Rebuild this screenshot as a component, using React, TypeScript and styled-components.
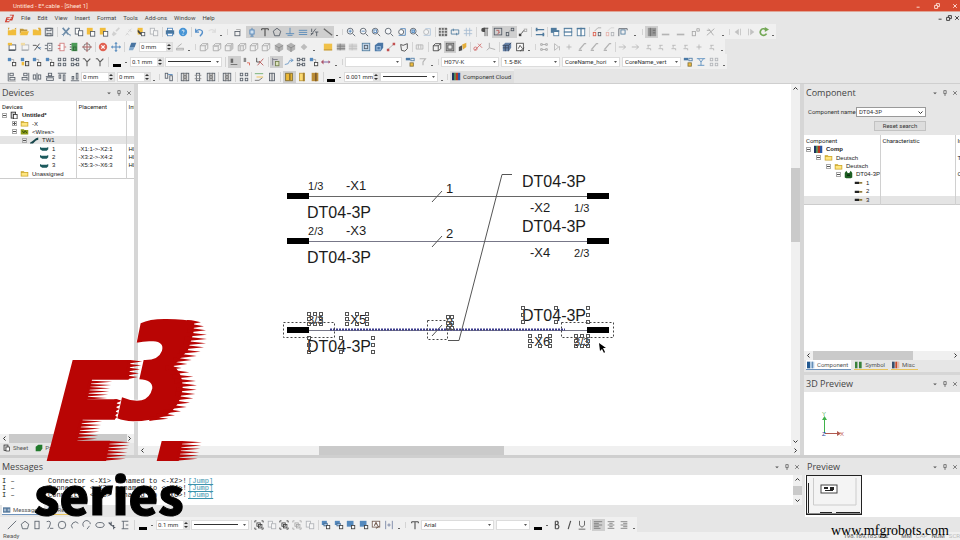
import React from "react";
import styled, { createGlobalStyle } from "styled-components";

const ui = 'Roboto, "Open Sans", sans-serif';
const headFont = '"Open Sans", "Noto Sans", sans-serif';
const sans = '"Liberation Sans", Arial, sans-serif';

const Global = createGlobalStyle`
  * { box-sizing: border-box; }
  html, body { margin: 0; }
  body { background: #e6e6e6; color: #333; font: 6px/8px ${ui}; overflow: hidden; }
  button, input, select { font: inherit; color: inherit; margin: 0; padding: 0; border: 0; border-radius: 0; background: none; outline: 0; }
`;

/* ---------- icons ---------- */

const N = "#39424e";
const B = "#2f6fb0";
const Y = "#f2b51d";
const G = "#9a9a9a";
const R = "#d9442f";
const K = "#222";

const box = (x: number, y: number, w: number, h: number, s = N, f = "none") => (
  <rect x={x} y={y} width={w} height={h} stroke={s} fill={f} />
);
const ln = (d: string, s = N, w = 1) => <path d={d} stroke={s} strokeWidth={w} fill="none" />;
const sh = (d: string, f = N) => <path d={d} fill={f} stroke="none" />;

const cube = (extra?: React.ReactNode, s = G) => (
  <>
    {ln("M1.5 4.5h6v6h-6zM4 2h6.500v6M1.500 4.500 4 2M7.500 4.500 10.500 2M7.500 10.500 10.500 8", s)}
    {extra}
  </>
);
const lens = (inner?: React.ReactNode) => (
  <>
    <circle cx="5" cy="5" r="3.500" stroke={N} fill="#f7f9fb" />
    {ln("M8 8l3 3", N, 1)}
    {inner}
  </>
);
const lines = (xs: number[][]) => ln(xs.map(([a, b, y]) => `M${a} ${y}H${b}`).join(""), "#666");

const glyphs: Record<string, React.ReactNode> = {
  fnew: <>{sh("M1 4h4l1-1h5v7H1z", Y)}{sh("M1 1h2l-1 3zM9 2l2-1v2z", "#c98a00")}</>,
  fopen: <>{sh("M1 2h4l1 1h4v2H3L1 9z", "#b98a1d")}{sh("M3 5h9l-2 5H1z", Y)}</>,
  fdoc: <>{sh("M1 3h4l1 1h5v6H1z", Y)}{sh("M7 1h3l1 3-2 1z", "#d99f16")}</>,
  save: <>{box(1.5, 1.5, 9, 9, N, "#f8f8f8")}{box(3.5, 1.5, 5, 3)}{box(3.5, 7.5, 5, 3, N, "#ccc")}</>,
  cut: <>{ln("M2 1l7 8M10 1L3 9", "#557a9c", 2)}{ln("M1 9h2v2M9 9h2v2", "#557a9c")}</>,
  copy: <>{box(1.5, 1.5, 5, 7, N, "#fff")}{box(5.5, 4.5, 5, 6, N, "#fff")}</>,
  paste: <>{sh("M1 1h7v8H1z", Y)}{box(5.5, 5.5, 5, 5.5, N, "#fff")}</>,
  brush: <>{ln("M10 1L6 5", G, 2)}{sh("M3 5l4 3-4 3-2-2z", G)}</>,
  link: <>{ln("M9 2L5 6M6 3l3 3M2 10l3-3M3 7l3 3", G)}</>,
  pasteb: <>{sh("M2 1h6v8H2z", Y)}{sh("M2 3l6 6H5L2 6z", K)}{box(6.5, 6.5, 4, 4, N, "#fff")}</>,
  print: <>{box(3, 1.5, 6, 3, B, "#fff")}{sh("M1 4h10v5H1z", "#2d618f")}{box(3, 7.5, 6, 3, B, "#fff")}</>,
  help: <><circle cx="6" cy="6" r="5" fill="#2b86d1" />{ln("M4.500 4.500q1.500-2 3 0q0 1-1.500 2M6 8v1.500", "#fff")}</>,
  undo: ln("M2 2v4h4M2 6q4-5 8-1q1 3-3 6", "#3a7fc4", 1.5),
  redo: ln("M10 2v4H6M10 6Q6 1 2 5", "#bbb", 1.5),
  lock: <>{box(3.5, 5.5, 6, 5)}{ln("M5 3h5v2", G)}</>,
  plug: <>{box(3.5, 3.5, 5, 5, B, "#cfe3f5")}{ln("M6 1v2M6 9v2M4 11h4", B)}</>,
  T: ln("M2 2h8M6 2v9M2 2v2M10 2v2", "#333", 1.3),
  penta: ln("M6 1.500l4.500 3.500-1.700 5.500H3.200L1.500 5z", N),
  ground: ln("M6 1v7M1 8h10M3 10h6", "#3978b5"),
  bars: ln("M1 4h10M1 6.500h10M1 9h10", "#3978b5"),
  frac: ln("M2 2v4M1 10L7 2M6 6h4M8 6v5M1 8h3", N),
  slash: ln("M1 2l10 8", "#555", 1.5),
  zin: lens(ln("M3 5h4M5 3v4", B)),
  zout: lens(ln("M3 5h4", B)),
  zpage: lens(box(3.5, 3.5, 3, 3, B)),
  z: lens(),
  zwin: <>{ln("M2 10h8V2H4", B)}<circle cx="5" cy="6" r="3" stroke={N} fill="#fff" /></>,
  zall: lens(box(3.500, 3.500, 3, 3, B, "#9cc3e8")),
  grid: <>{sh("M1 1h10v10H1z", "#555")}{ln("M1 4h10M1 7.500h10M4 1v10M7.500 1v10", "#eee")}</>,
  clip: <>{ln("M1.500 3.500h9v5h-9zM4 2v3M8 7v3", "#33668f")}</>,
  guides: ln("M4 1v10M8 1v10M1 4h10M1 8h10", "#9ab3cc"),
  para: <>{sh("M6 1H4a2.500 2.500 0 000 5h2z", "#333")}{ln("M6 1v10M8.500 1v10M5 1.500h5", "#333")}</>,
  flow: <>{box(1.500, 1.500, 9, 8)}{ln("M4 4h3v3M5 9l3-3", "#b24040")}</>,
  nodes: <>{box(1.500, 6.500, 3, 4)}{box(7.500, 1.500, 3, 3)}{ln("M4 6l4-3", G)}</>,
  nodes2: <>{sh("M1 8h3v3H1z", K)}{box(7.500, 2.500, 3, 3, G)}{ln("M4 8l3-4", K)}</>,
  swap: <>{ln("M1 3h10M1 9h10", "#33668f", 1.500)}{sh("M1 1h2v4H1zM9 7h2v4H9z", "#33668f")}</>,
  casc: <>{sh("M1 1h7v6H1z", "#33668f")}{box(4.500, 4.500, 6, 6, "#33668f", "#fff")}{sh("M4 4h7v2H4z", "#33668f")}</>,
  tileh: <>{box(1.500, 1.500, 9, 9, "#33668f", "#fff")}{ln("M1 6h10", "#33668f", 1.500)}{ln("M1 2h10", "#33668f")}</>,
  tilev: <>{box(1.500, 1.500, 9, 9, "#33668f", "#fff")}{ln("M6 1v10M1 2h10", "#33668f", 1.500)}</>,
  rnodes: <>{box(1.500, 6.500, 3, 4, R)}{box(7.500, 6.500, 3, 4)}{ln("M3 5l4-4h4", G)}</>,
  port: <>{box(3.500, 3.500, 5, 5, "#33668f")}{ln("M1 2h10M1 2v9M11 2v2", N)}</>,
  sheet: <>{sh("M1 1h10v10H1z", "#8b8b8b")}{ln("M4 1v10M7 4h3M7 7h3", "#555")}</>,
  dash: ln("M1 9h9", "#aaa", 2),
  super: <>{box(1.500, 5.500, 4, 5, G)}{ln("M7 2h3v3H7z", G)}</>,
  cross: ln("M1 10L10 2M3 2l6 8M1 4h4", "#999"),
  prev: <>{sh("M7 2v8L2 6z", "#bbb")}{ln("M9 2v8", "#bbb")}</>,
  next: <>{sh("M5 2v8l5-4z", "#bbb")}{ln("M3 2v8", "#bbb")}</>,
  refresh: <>{ln("M9 8a4 4 0 11-1-5", "#5d9b3a", 2)}{sh("M7 0l5 3-5 3z", "#5d9b3a")}</>,
  sheetn: <>{box(2.500, 3.500, 8, 6, N, "#fff")}{sh("M1 1h5v3H1z", Y)}{ln("M2 10l8 0", N, 1.500)}</>,
  wires: <>{ln("M1 4h4l5 5M3 10L9 2", K)}{ln("M7 7h4", B)}</>,
  conn: <>{box(4.500, 1.500, 5, 9, N, "#fff")}{ln("M1 4h3M1 8h3M6 4h2M6 8h2", N)}</>,
  rconn: <>{box(3.500, 1.500, 5, 9, "#c66", "#fff")}{ln("M1 4h3M1 8h3M9 6h2", "#c44")}</>,
  green: <>{sh("M3 1h7v10H3z", "#2f8c3c")}{ln("M1 3h2M1 6h2M1 9h2", K)}{box(5.500, 6, 3, 4, "#124d1b")}</>,
  target: <><circle cx="6" cy="6" r="4" stroke="#555" fill="none" />{ln("M6 0v12M0 6h12", "#933")}</>,
  stop: <><circle cx="6" cy="6" r="5" fill="#df4a37" />{ln("M4 4l4 4M8 4l-4 4", "#fff", 1.500)}</>,
  move: <>{ln("M6 1v10M1 6h10", "#3978b5", 1.300)}{sh("M6 0l2 2H4zM6 12l2-2H4zM0 6l2-2v4zM12 6l-2-2v4z", "#3978b5")}</>,
  stack: <>{sh("M4 1h6l-2 5H2z", "#2b5f94")}{sh("M2 6h6l-2 4H1z", "#6f9cc6")}</>,
  pour: <>{box(2, 7.500, 8, 2, G)}{ln("M3 6l5-4", G)}</>,
  cube1: cube(), cube2: cube(sh("M1 4h7v2H1z", "#bbb")), cube3: cube(sh("M8 4l3-2v6l-3 3z", "#bbb")), cube4: cube(sh("M3 4h2v6H3z", "#bbb")),
  hex: <>{sh("M6 1l5 3v5l-5 3-5-3V4z", "#a8a8a8")}{ln("M1 4l5 3 5-3M6 7v5", "#777")}</>,
  diam: sh("M6 2l4 4-4 4-4-4z", "#b5b5b5"),
  ysheet: <>{sh("M1 2h10v8H1z", "#f0b92d")}{ln("M1 9.500h10", "#a87b12")}</>,
  rack: <>{sh("M1 2h10v8H1z", "#aaa")}{ln("M1 5h10M1 8h10M5 2v8", "#666")}</>,
  panel: <>{box(1.500, 1.500, 9, 9, "#33668f", "#bcd3e8")}{box(4, 4, 4, 4, N)}</>,
  bluebox: <>{sh("M1 4l4-3h6v6l-3 4H1z", "#2f639a")}{box(3.500, 5.500, 4, 4, "#9fc2e6")}</>,
  rpath: <>{ln("M2 9l8-7", G)}{sh("M1 8h3v3H1zM8 1h3v3H8z", "#b33")}</>,
  shield: ln("M2 3l3 1 5-2v6l-3 3-4-1z", K),
  dots: <>{ln("M1.500 3.500h8v5h-8zM4 3v5M7 3v5", "#aaa")}</>,
  wcube: cube(undefined, K),
  frame: <>{box(1.500, 1.500, 9, 9, "#444", "#bbb")}{box(3.500, 3.500, 5, 5, "#333", "#eee")}</>,
  ybolt: <>{sh("M1 6l4-2v6l-4 1z", "#333")}{sh("M5 3l5-2v5l-4 3z", "#e2a21a")}</>,
  redx: <>{ln("M2 10l8-8M6 2l5 5", "#c55")}<circle cx="3" cy="8" r="2" stroke="#c55" fill="none" /></>,
  axis: ln("M4 1v6l7 2M4 7l-3 3", "#999"),
  bcube: <>{sh("M1 4l3-3h7v6l-3 4H1z", "#4f6f9b")}{ln("M1 4h7v7M8 4l3-3M4 4v7M1 7h7", "#1f2d45")}</>,
  report: <>{box(2, 1.500, 8, 9, K, "#fff")}{ln("M4 8l2-4 3 4M6 11l5-4", K)}</>,
  fgrp: ln("M2 2h2v2H2zM8 2h2v2H8zM2 8h2v2H2zM8 8h2v2H8zM4 3h4M4 9h4", "#999"),
  fplay: ln("M3 2l5 4-5 4zM9 5v5", "#aaa"),
  plus: ln("M3 6h6M6 3v6", "#aaa"),
  fdiag: ln("M2 10h4M3 9l6-7h2", "#aaa", 1.500),
  fsmall: ln("M4 4h4M5 4v3M3 8h5v2", "#aaa"),
  farrow: ln("M1 6h8M6 3l3 3-3 3", "#aaa"),
  bnode: <>{sh("M1 1h4v4H1z", "#3978b5")}{ln("M5 3h3v3", G)}{box(6.500, 6.500, 4, 4, K, "#fff")}</>,
  bnodey: <>{sh("M1 1h4v4H1z", "#3978b5")}{sh("M2 6h3v4H2z", Y)}{box(6.500, 5.500, 4, 5, K, "#ddd")}</>,
  quad: <>{box(1.500, 1.500, 3, 3)}{box(7.500, 1.500, 3, 3)}{box(1.500, 7.500, 3, 3)}{box(7.500, 7.500, 3, 3)}</>,
  quadl: <>{box(1.500, 1.500, 3, 3)}{box(7.500, 1.500, 3, 3)}{box(1.500, 7.500, 3, 3)}{box(7.500, 7.500, 3, 3)}{ln("M5 3h3M5 9h3", N)}</>,
  fork: <>{ln("M6 11V6L3 2H1M6 6l4-4", "#444", 1.300)}</>,
  tag: <>{sh("M2 2h3v5H2z", "#555")}{ln("M2 9h8", "#555")}</>,
  tagr: <>{sh("M2 1h3v5H2z", "#777")}{ln("M6 7h3v3", R)}</>,
  tagx: <>{ln("M2 1v5h4", K)}{ln("M3 10l7-8M5 5l5 5", "#a33")}</>,
  ybox: <>{box(5.500, 5.500, 4, 5, "#5f7030", "#dfe6b8")}{ln("M2 1v9M2 3h6", "#667")}</>,
  bwave: ln("M1 9l4-1 2-4h4M8 2l3 2-3 2", "#4d86bd"),
  redarrow: <>{ln("M1 6h10", "#6d4e9c", 1.200)}{sh("M3 3v6L0 6zM9 4v4l2-2z", "#a33b50")}</>,
  chain: <>{sh("M1 1h5v3H1z", "#2c6499")}{box(7, 1.500, 4, 3, "#2c6499")}{box(6, 7, 4, 4, "#6d5a20", Y)}</>,
  filt: ln("M2 2h7L6 6v4", "#aaa", 1.300),
  ytee: ln("M1 2h10M3 2l3 4 3-4M6 6v4M2 10h8", "#3978b5"),
  alignl: <>{ln("M1.500 11h9", G)}{box(3.500, 1.500, 4, 3)}{box(3.500, 6.500, 6, 3)}{ln("M1.500 1v10")}</>,
  alignr: <>{box(4.500, 1.500, 4, 3)}{box(2.500, 6.500, 6, 3)}{ln("M10.500 1v10")}</>,
  alignc: <>{box(1.500, 3.500, 3, 5)}{box(7.500, 3.500, 3, 5)}{ln("M6 1v10")}</>,
  alignm: <>{box(4, 1.500, 4, 3)}{box(2, 7, 8, 3)}{ln("M1 5.500h10")}</>,
  aligntop: <>{ln("M1 1.500h10")}{box(2.500, 3.500, 2, 4)}{box(7.500, 3.500, 2, 7)}</>,
  alignbot: <>{ln("M1 10.500h10")}{box(2.500, 5.500, 2, 3)}{box(7.500, 1.500, 2, 7)}</>,
  pair: <>{box(1.500, 1.500, 3, 6)}{box(7, 4.500, 3, 6)}{ln("M5 3h5v1", B)}</>,
  film: <>{box(1.500, 1.500, 9, 9)}{ln("M4 1v10M8 1v10M4 6h4", "#555")}{sh("M5 3h2v2H5zM5 7h2v2H5z", "#555")}</>,
  film2: <>{box(4, 1.500, 4, 9)}{ln("M2 4h8M2 8h8", "#777")}</>,
  wave: <>{ln("M1 2h10", "#4a9b4a")}{ln("M3 6h8", Y)}{ln("M1 10h5l4-3", "#555")}</>,
  book: <>{box(3, 1.500, 6, 9, N, "#ddd")}{ln("M6 1v10")}</>,
  gold: <>{box(2, 1.500, 8, 9, "#6b5410", Y)}{sh("M6 2h2v8H6z", "#8a6a12")}</>,
  gold2: <>{box(3, 1.500, 6, 9, "#b58b1a", "#ffd75c")}{sh("M7 1h2v10H7z", "#9a6d10")}</>,
  gold3: <>{sh("M2 1h8v10H2z", "#b27c16")}{sh("M6 1h2v10H6z", "#6d4308")}</>,
  line: ln("M1 11L11 1"), penta2: ln("M6 1.500L10.500 5 9 10.500H3L1.500 5z"), rect: box(3.500, 1.500, 5, 9),
  curve: ln("M2 2q6-2 4 4t-3 4M6 10h4"), circ: <circle cx="6" cy="6" r="4.500" stroke={N} fill="none" />,
  arc: ln("M3 10a4.500 4.500 0 117-6"), arc2: ln("M2 8a4.500 4.500 0 118-3M9 7l-3 4"),
  oval: <ellipse cx="6" cy="6" rx="5" ry="3" stroke={N} fill="none" />,
  spline: <>{ln("M2 3l3 3 5 3M5 2v5M8 6v5", N, 1.300)}</>,
  text: ln("M2 1.500h8M4 1.500v9M2 10.500h8M7 6h3"),
  group: <>{box(3.500, 3.500, 4, 4, K)}{box(5.500, 5.500, 4, 4, K)}{ln("M1 3V1h2M9 1h2v2M1 9v2h2M11 9v2H9", K)}</>,
  order: <>{sh("M1 1h6v5H1z", "#3978b5")}{box(3.500, 4, 4, 3, "#235180", "#9fc4e8")}{box(6.500, 6.500, 4, 4, K, "#fff")}</>,
  order2: <>{sh("M1 1h8v7H1z", "#3978b5")}{box(6.500, 6.500, 4, 4, K, "#fff")}</>,
  poster: <>{box(1.500, 1.500, 9, 7, "#5c4033", "#fff")}{ln("M4 7l2-4 2 4M6 10l4-3", "#5c4033", 1.300)}</>,
  spread: ln("M2 1v10M10 1v10M4 6h4M6 4v4", "#5b6e94"),
  B: ln("M4 1.500v9M4 1.500h2.500q2 2 0 4H4h3q2.500 2.500 0 5H4", "#333", 1.400),
  I: ln("M8 1L5 11", "#333", 1.400),
  U: ln("M3 1v5q3 5 6 0V1M2 11h8", "#555", 1.200),
  left: lines([[1, 11, 2], [1, 7, 4], [1, 11, 6], [1, 7, 8], [1, 9, 10]]),
  center: lines([[2, 10, 2], [4, 8, 4], [2, 10, 6], [4, 8, 8], [2, 10, 10]]),
  right: lines([[2, 10, 2], [5, 10, 4], [2, 10, 6], [5, 10, 8], [2, 10, 10]]),
  logo: <>{sh("M3 5h4v1H4v1h2v1H4l-1 2h4l-1 1H1z", "#d03a2b")}{sh("M7 2h5l-1 4-1 3H6l1-2h2V6H8V5h2V3H7z", "#d03a2b")}</>,
  doc: <>{box(1.500, 1.500, 6, 8, K, "#ccc")}{box(4.500, 4.500, 5, 6, K, "#fff")}</>,
  folder: <>{sh("M1 3h4l1 1h5v6H1z", "#c9a227")}{sh("M2 5h8v4H2z", "#ffe680")}</>,
  wfolder: <>{sh("M1 3h4l1 1h5v6H1z", "#8d9b18")}{ln("M3 5l2 3 2-3 2 3", "#33510e", 1.300)}</>,
  cable: <>{sh("M0 9l3-2 5-4 3-1v3l-3 1-4 4H0z", "#15454a")}</>,
  core: <>{sh("M0 4l2 1h7l2-1v3L9 9H3L0 7z", "#1c5a5d")}</>,
  comp: <>{sh("M0 1h3v10H0z", "#1d3561")}{sh("M3 1h2v10H3z", "#2a7d35")}{sh("M5 1h3v10H5z", "#b6371f")}{sh("M8 1h3v10H8z", "#2a57a5")}</>,
  dplug: <>{sh("M1 4l2-3 2 3h2l2-3 2 3v6l-2 1H3l-2-1z", "#1d5e22")}{sh("M4 6h4v2H4z", "#0c2d10")}</>,
  pin: <>{sh("M1 5h6v3H1z", K)}{ln("M7 6.500h4", "#806a20", 2)}</>,
  bbook: <>{sh("M0 1h5v10H0z", "#235a92")}{sh("M5 1h6v10H5z", "#b7cfe4")}{ln("M8 1v10", "#235a92")}</>,
  gbook: <>{sh("M0 1h4v10H0zM6 1h4v10H6z", "#39823b")}{sh("M4 1h2v10H4z", "#ddd")}</>,
  rbook: <>{sh("M0 1h4v10H0z", "#38506e")}{sh("M5 1h3v10H5z", "#c7482a")}{sh("M8 1h3v10H8z", "#e5b8a8")}</>,
  leaf: sh("M1 4l4-3h6v6l-3 4H1z", "#217a2c"),
  msg: <>{sh("M0 2h11v8H0z", "#54789c")}{ln("M2 4v4M4 4v4M7 5h3M7 7h3", "#e8f0f8")}</>,
};

const Svg = styled.svg`
  display: block;
  flex: none;
  width: 10px;
  height: 10px;
  overflow: visible;
`;
const Icon = ({ name }: { name: string }) => (
  <Svg viewBox="0 0 12 12" aria-hidden="true">{glyphs[name]}</Svg>
);

/* ---------- toolbars ---------- */

const TitleBar = styled.header`
  display: flex;
  align-items: center;
  gap: 3px;
  height: 12px;
  padding: 0 2px;
  flex: none;
  color: #ffe5dd;
  background: #d84a30;
  border-bottom: 1px solid #e0a596;
`;
const Spacer = styled.span`flex: 1;`;
const WinButtons = styled.div<{ $gap: number }>`
  display: flex;
  gap: ${(p) => p.$gap}px;
`;
const WinButton = styled.button`
  display: block;
  width: 6px;
  height: 6px;
  svg { width: 6px; height: 6px; }
`;
const winPaths = { Minimize: "M1 7h5", Restore: "M1 4h5v5H1zM4 4V1h5v5H6", Close: "M2 2l6 6M8 2L2 8" };
const Win = ({ gap }: { gap: number }) => (
  <WinButtons $gap={gap}>
    {(["Minimize", "Restore", "Close"] as const).map((n) => (
      <WinButton key={n} aria-label={n}>
        <Svg viewBox="0 0 10 10"><path d={winPaths[n]} fill="none" stroke="currentColor" strokeWidth="1.500" /></Svg>
      </WinButton>
    ))}
  </WinButtons>
);

const MenuBar = styled.nav`
  display: flex;
  align-items: center;
  height: 12px;
  padding: 0 0 0 4px;
  flex: none;
  gap: 7px;
`;
const MenuItem = styled.button`
  white-space: nowrap;
  color: #444;
`;
const Toolbars = styled.div`
  display: grid;
  grid-template-rows: repeat(4, 1fr);
  justify-items: start;
  height: 59px;
  flex: none;
`;
const Strip = styled.div`
  display: flex;
  align-items: center;
  height: 15px;
  padding-left: 6px;
  background: #f0f0f0;
`;
const Group = styled.div<{ $w: number }>`
  display: flex;
  flex: none;
  width: ${(p) => p.$w}px;
`;
const Tool = styled.button<{ $on: boolean; $dim: boolean }>`
  display: flex;
  flex: 1;
  min-width: 0;
  height: 12px;
  align-items: center;
  justify-content: center;
  background: ${(p) => (p.$on ? "#cfcfcf" : "none")};
  svg { opacity: ${(p) => (p.$dim ? 0.35 : 0.85)}; }
`;
const Sep = styled.span<{ $w: number; $grip?: boolean }>`
  flex: none;
  display: block;
  width: ${(p) => p.$w}px;
  height: 10px;
  background: linear-gradient(#d4d4d4, #d4d4d4) center / 1px ${(p) => (p.$grip ? "6px" : "10px")} no-repeat;
`;
const Gap = styled.span<{ $w: number }>`
  flex: none;
  width: ${(p) => p.$w}px;
`;
const More = styled.button<{ $w: number }>`
  flex: none;
  width: ${(p) => p.$w}px;
  height: 12px;
  background: linear-gradient(#666, #666) center bottom 2px / 2px 1px no-repeat;
`;

const Tools = ({ w, i }: { w: number; i: string }) => (
  <Group $w={w}>
    {i.split(" ").map((t, k) => {
      const n = t.replace(/[!~]/g, "");
      return (
        <Tool key={k} $on={t.includes("!")} $dim={t.includes("~")} aria-label={n}>
          <Icon name={n} />
        </Tool>
      );
    })}
  </Group>
);

const Field = styled.label<{ $w: number }>`
  display: flex;
  align-items: center;
  flex: none;
  width: ${(p) => p.$w}px;
  height: 10px;
  background: #fff;
  border: 1px solid #dcdcdc;
  svg { width: 6px; height: 8px; }
`;
const FieldInput = styled.input`
  flex: 1;
  min-width: 0;
  height: 8px;
  padding-left: 1px;
`;
const FieldSelect = styled.select`
  flex: 1;
  min-width: 0;
  height: 8px;
  padding-left: 2px;
  appearance: none;
  line-height: 8px;
`;
const Spin = ({ v, w = 34, label }: { v: string; w?: number; label: string }) => (
  <Field $w={w}>
    <FieldInput defaultValue={v} aria-label={label} />
    <Svg viewBox="0 0 6 8"><rect width="6" height="8" fill="#e2e2e2" /><path d="M3 1l2 2H1zM3 7l2-2H1z" fill="#333" /></Svg>
  </Field>
);
const Drop = ({ v, w, label }: { v: string; w: number; label: string }) => (
  <Field $w={w}>
    <FieldSelect defaultValue={v} aria-label={label}><option>{v}</option></FieldSelect>
    <Svg viewBox="0 0 6 8"><path d="M1 3h3L2.500 5z" fill="#555" /></Svg>
  </Field>
);
const LineFill = styled.span`
  flex: 1;
  height: 1px;
  margin-left: 2px;
  background: #333;
  & + svg { margin-left: 4px; }
`;
const LineButton = styled.button<{ $w: number }>`
  display: flex;
  align-items: center;
  flex: none;
  width: ${(p) => p.$w}px;
  height: 10px;
  background: #fff;
  border: 1px solid #dcdcdc;
  svg { width: 6px; height: 8px; }
`;
const LineStyle = ({ w }: { w: number }) => (
  <LineButton $w={w} aria-label="Line style">
    <LineFill />
    <Svg viewBox="0 0 6 8"><path d="M1 3h3L2.500 5z" fill="#555" /></Svg>
  </LineButton>
);
const SwatchButton = styled.button`
  flex: none;
  width: 19px;
  height: 12px;
  background:
    linear-gradient(#000, #000) 2px 8px / 8px 3px no-repeat,
    linear-gradient(#666, #666) 14px 6px / 2px 1px no-repeat;
`;
const CloudButton = styled.button`
  display: flex;
  align-items: center;
  gap: 2px;
  height: 12px;
  padding: 0 3px 0 2px;
  white-space: nowrap;
  background: #dedede;
  svg { width: 9px; height: 9px; }
`;

/* ---------- panels ---------- */

const Page = styled.div`
  display: flex;
  flex-direction: column;
  height: 100vh;
`;
const Main = styled.main`
  display: grid;
  grid-template-columns: 134px 1fr 156px;
  gap: 4px;
  flex: 1;
  min-height: 0;
  border-top: 1px solid #cfcfcf;
  background: #d6d6d6;
`;
const Panel = styled.section`
  display: flex;
  flex-direction: column;
  flex: 1;
  min-width: 0;
  min-height: 0;
  overflow: hidden;
  background: #e6e6e6;
`;
const PreviewPanel = styled(Panel)`
  flex: none;
  height: 80px;
`;
const Stack = styled.div`
  display: flex;
  flex-direction: column;
  gap: 3px;
  min-width: 0;
  min-height: 0;
`;
const Head = styled.div`
  display: flex;
  align-items: center;
  flex: none;
  height: 17px;
  padding: 0 2px;
`;
const HeadTitle = styled.h2`
  flex: 1;
  margin: 0;
  font: 400 9px/16px ${headFont};
  color: #444;
`;
const HeadButtons = styled.div`
  display: flex;
  gap: 4px;
  svg { width: 6px; height: 6px; }
`;
const HeadIcon = styled.button`width: 6px; height: 6px;`;
const Header = ({ title }: { title: string }) => (
  <Head>
    <HeadTitle>{title}</HeadTitle>
    <HeadButtons>
      {[["Options", "M2 4h6L5 7z"], ["Pin", "M3 1h4v5H3zM5 6v4"], ["Close", "M2 2l6 6M8 2L2 8"]].map(([n, d], k) => (
        <HeadIcon key={n} aria-label={n}>
          <Svg viewBox="0 0 10 10"><path d={d} stroke={k ? "#555" : "none"} fill={k ? "none" : "#555"} strokeWidth="1.200" /></Svg>
        </HeadIcon>
      ))}
    </HeadButtons>
  </Head>
);
const White = styled.div`
  flex: 1;
  min-height: 0;
  overflow: hidden;
  background: #fff;
`;
const TreeTable = styled.table<{ $h: number; $cols: [number, number] }>`
  width: 100%;
  height: ${(p) => p.$h}px;
  border-collapse: collapse;
  table-layout: fixed;
  font: 6px/8px ${sans};
  color: #222;
  border-bottom: 1px solid #ccc;
  th:nth-child(1) { width: ${(p) => p.$cols[0]}px; }
  th:nth-child(2) { width: ${(p) => p.$cols[1]}px; }
`;
const Th = styled.th`
  height: 10px;
  padding: 1px 0 0 2px;
  font: 6px/8px ${ui};
  text-align: left;
  white-space: nowrap;
  overflow: hidden;
  & + & { border-left: 1px solid #d0d0d0; }
`;
const Td = styled.td`
  padding: 0 0 0 2px;
  white-space: nowrap;
  overflow: hidden;
  border-left: 1px solid #d0d0d0;
`;
const NodeCell = styled.td<{ $d: number; $b: boolean }>`
  padding: 0 0 0 ${(p) => p.$d * 10}px;
  overflow: hidden;
  font-weight: ${(p) => (p.$b ? 700 : 400)};
`;
const NodeBox = styled.div`
  display: flex;
  align-items: center;
  height: 8px;
  white-space: nowrap;
  svg { width: 9px; height: 9px; }
`;
const Tr = styled.tr<{ $sel: boolean }>`background: ${(p) => (p.$sel ? "#e4e4e4" : "none")};`;
const Expander = styled.span<{ $s: string }>`
  flex: none;
  width: 5px;
  height: 5px;
  margin: 0 3px 0 2px;
  border: 1px solid ${(p) => (p.$s ? "#aaa" : "transparent")};
  background: ${(p) =>
    p.$s === "+"
      ? "linear-gradient(#555, #555) center / 3px 1px no-repeat, linear-gradient(#555, #555) center / 1px 3px no-repeat"
      : p.$s
        ? "linear-gradient(#555, #555) center / 3px 1px no-repeat"
        : "none"};
`;
const NodeLabel = styled.span`margin-left: 3px;`;

type Row = [number, string, string, string, string?, string?, boolean?];
const Tree = ({ h, cols, heads, rows }: { h: number; cols: [number, number]; heads: string[]; rows: Row[] }) => (
  <TreeTable $h={h} $cols={cols}>
    <thead><tr>{heads.map((x) => <Th key={x}>{x}</Th>)}</tr></thead>
    <tbody>
      {rows.map(([d, e, ic, t, a, b, sel], k) => (
        <Tr key={k} $sel={!!sel}>
          <NodeCell $d={d} $b={d === 0}>
            <NodeBox><Expander $s={e} /><Icon name={ic} /><NodeLabel>{t}</NodeLabel></NodeBox>
          </NodeCell>
          <Td>{a}</Td>
          <Td>{b}</Td>
        </Tr>
      ))}
    </tbody>
  </TreeTable>
);

const deviceRows: Row[] = [
  [0, "-", "doc", "Untitled*"],
  [1, "+", "folder", "-X"],
  [1, "-", "wfolder", "<Wires>"],
  [2, "-", "cable", "TW1", "", "", true],
  [3, "", "core", "1", "-X1:1->-X2:1", "H0"],
  [3, "", "core", "2", "-X3:2->-X4:2", "H0"],
  [3, "", "core", "3", "-X5:3->-X6:3", "H0"],
  [1, "", "folder", "Unassigned"],
];
const componentRows: Row[] = [
  [0, "-", "comp", "Comp"],
  [1, "-", "folder", "Deutsch", "", "T"],
  [2, "-", "folder", "Deutsch"],
  [3, "-", "dplug", "DT04-3P", "", "C"],
  [4, "", "pin", "1"],
  [4, "", "pin", "2"],
  [4, "", "pin", "3", "", "", true],
];

const ScrollX = styled.div<{ $from: string; $size: string }>`
  display: flex;
  align-items: center;
  justify-content: space-between;
  flex: none;
  height: 9px;
  padding: 0 2px;
  background: linear-gradient(#cacaca, #cacaca) ${(p) => p.$from} 0 / ${(p) => p.$size} 9px no-repeat #f0f0f0;
  svg { width: 5px; height: 5px; }
`;
const ScrollY = styled.div<{ $from: number; $size: number }>`
  display: flex;
  flex-direction: column;
  align-items: center;
  justify-content: space-between;
  flex: none;
  width: 9px;
  padding: 2px 0;
  background: linear-gradient(#cacaca, #cacaca) 0 ${(p) => p.$from}px / 9px ${(p) => p.$size}px no-repeat #f0f0f0;
  svg { width: 5px; height: 5px; }
`;
const arrows = { l: "M7 1L3 5l4 4", r: "M3 1l4 4-4 4", u: "M1 7l4-4 4 4", d: "M1 3l4 4 4-4" };
const Arrow = ({ to }: { to: keyof typeof arrows }) => (
  <Svg viewBox="0 0 10 10"><path d={arrows[to]} fill="none" stroke="#333" strokeWidth="2" /></Svg>
);

const Tabs = styled.div<{ $h: number }>`
  display: flex;
  flex: none;
  gap: 3px;
  height: ${(p) => p.$h}px;
  padding: 0 2px;
  align-items: flex-start;
  svg { width: 8px; height: 8px; }
`;
const Tab = styled.button<{ $c: string; $on?: boolean }>`
  display: flex;
  align-items: center;
  gap: 2px;
  height: 10px;
  padding: 0 3px 0 1px;
  color: #555;
  background: ${(p) => (p.$on ? "#fff" : "none")};
  border-bottom: 1px solid ${(p) => p.$c};
`;

/* ---------- schematic ---------- */

const CanvasRow = styled.div`
  display: flex;
  flex: 1;
  min-height: 0;
  background: #fff;
`;
const Sheet = styled.svg`
  flex: 1;
  min-width: 0;
  height: 100%;
  font-family: ${sans};
  fill: #1c1c1c;
`;
const Pin = styled.text`font-size: 11px;`;
const Part = styled.text`font-size: 16px;`;
const Name = styled.text`font-size: 13px;`;

const Handles = ({ x, y, w, h, nx = 3, ny = 3 }: { x: number; y: number; w: number; h: number; nx?: number; ny?: number }) => (
  <g fill="none" stroke="#555">
    {Array.from({ length: nx * ny }, (_, k) => [k % nx, Math.floor(k / nx)])
      .filter(([i, j]) => !(nx === 3 && i === 1 && j === 1))
      .map(([i, j]) => (
        <rect key={`${i}-${j}`} x={x + Math.round((w * i) / (nx - 1)) - 1.5} y={y + Math.round((h * j) / (ny - 1)) - 1.5} width="3" height="3" />
      ))}
  </g>
);

const wires = [
  { y: 196, n: "1", l: "-X1", r: "-X2", lp: 218, rp: 187 },
  { y: 241, n: "2", l: "-X3", r: "-X4", lp: 263, rp: 232 },
  { y: 330, n: "3", l: "-X5", r: "-X6", lp: 352, rp: 321 },
];

const Schematic = () => (
  <Sheet role="img" aria-label="Schematic sheet">
    <g transform="translate(-138 -84)">
      {wires.map((w) => (
        <g key={w.n}>
          <path d={`M308 ${w.y + 0.5}H588`} stroke={w.n === "1" ? "#666" : "#778"} />
          <path d={`M432 ${w.y + 6}L442 ${w.y - 5}`} stroke="#555" />
          <rect x="287" y={w.y - 3} width="22" height="6" fill="#000" />
          <rect x="587" y={w.y - 3} width="22" height="6" fill="#000" />
          <Pin x="308" y={w.y - 6}>{w.n}/3</Pin>
          <Name x="346" y={w.y - 6}>{w.l}</Name>
          <Part x="307" y={w.lp}>DT04-3P</Part>
          <Name x="446" y={w.y - 3}>{w.n}</Name>
          <Part x="522" y={w.rp}>DT04-3P</Part>
          <Name x="530" y={w.y + 16}>{w.r}</Name>
          <Pin x="574" y={w.y + 16}>{w.n}/3</Pin>
        </g>
      ))}
      <path d="M512 174.500H502L459 340.500H448" fill="none" stroke="#555" />
      <path d="M330 329.500H565" stroke="#3a3a8c" strokeWidth="2" strokeDasharray="2 1" />
      <g fill="none" stroke="#444" strokeDasharray="2 2">
        <rect x="283.500" y="322.500" width="51" height="15" />
        <rect x="427.500" y="320.500" width="20" height="19" />
        <rect x="561.500" y="322.500" width="52" height="15" />
      </g>
      <Handles x={309} y={314} w={12} h={10} />
      <Handles x={347} y={314} w={20} h={10} />
      <Handles x={309} y={338} w={64} h={14} />
      <Handles x={448} y={317} w={4} h={11} nx={2} />
      <Handles x={523} y={308} w={65} h={14} />
      <Handles x={530} y={336} w={20} h={10} />
      <Handles x={576} y={336} w={12} h={10} />
      <path d="M599 343l1 8 2-2 2 4 1-1-2-4h3z" fill="#000" />
    </g>
  </Sheet>
);

const Form = styled.form`
  display: grid;
  grid-template-columns: 48px 70px;
  row-gap: 4px;
  flex: none;
  align-items: center;
  height: 34px;
  align-content: start;
  padding: 6px 0 0 4px;
  font: 6px/8px ${ui};
  white-space: nowrap;
`;
const Combo = styled.label`
  display: contents;
`;
const ComboBox = styled.span`
  display: flex;
  height: 10px;
  align-items: center;
  background: #fff;
  border: 1px solid #999;
  svg { width: 5px; height: 5px; margin-right: 2px; }
`;
const ResetButton = styled.button`
  grid-column: 2;
  justify-self: end;
  width: 52px;
  height: 10px;
  background: #ddd;
  border: 1px solid #c2c2c2;
`;
const Axes = styled.svg`
  display: block;
  width: 60px;
  height: 60px;
  font: 6px ${sans};
`;

const Bottom = styled.div`
  display: grid;
  grid-template-columns: 1fr 155px;
  column-gap: 3px;
  height: 62px;
  flex: none;
  border-top: 3px solid #cfcfcf;
`;
const Log = styled.div`
  display: flex;
  justify-content: space-between;
  flex: none;
  height: 30px;
  background: #fff;
`;
const LogRows = styled.div`
  padding: 3px 2px 2px;
  font: 7px/7px "Liberation Mono", monospace;
  color: #222;
  white-space: pre;
`;
const LogRow = styled.div`
  display: grid;
  grid-template-columns: 46px 140px auto;
`;
const Jump = styled.a`color: #3b93ad;`;
const Thumb = styled.svg`
  display: block;
  width: 56px;
  height: 41px;
  margin-left: 1px;
`;
const Status = styled.footer`
  display: flex;
  align-items: center;
  gap: 4px;
  height: 8px;
  padding: 0 0 0 3px;
  flex: none;
  background: #f0f0f0;
`;
const StatusText = styled.span<{ $dim?: boolean }>`
  color: ${(p) => (p.$dim ? "#bbb" : "#555")};
`;
const BottomBar = styled.div`
  display: flex;
  height: 15px;
  flex: none;
`;

/* ---------- brand overlay ---------- */

const Brand = styled.div`
  position: absolute;
  left: 34px;
  bottom: 12px;
  pointer-events: none;
`;
const Mark = styled.svg`
  display: block;
  width: 162px;
  height: 144px;
  margin-left: 12px;
`;
const Word = styled.div`
  height: 66px;
  font: 900 50px/62px "Noto Sans CJK SC", Roboto, sans-serif;
  color: #000;
  -webkit-text-stroke: 1px #000;
`;
const Watermark = styled.div`
  position: absolute;
  right: 11px;
  bottom: 1px;
  font: 14px/16px "Liberation Serif", serif;
  color: #000;
`;

const fan = (n: number, x0: number, x1: number, t0: number, t1: number, y0: number, y1: number) => {
  const s = (y1 - y0) / n;
  return Array.from({ length: n }, (_, k) => {
    const f = (k + 0.5) / n;
    const x = x0 + (x1 - x0) * f;
    const y = y0 + s * k;
    return `M${x - 8} ${y}H${x}L${t0 + (t1 - t0) * f} ${y + s * 0.35}L${x} ${y + s * 0.85}H${x - 8}z`;
  }).join("");
};
const streaks = (tips: number[][]) =>
  tips.map(([b, t, y]) => `M${b - 14} ${y - 7}L${b} ${y - 6}L${t} ${y}L${b} ${y + 5}L${b - 14} ${y + 7}z`).join("");

const upper = [[575, 603, 37], [578, 612, 49], [576, 618, 61], [572, 621, 74], [568, 621, 87], [564, 618, 100], [560, 612, 112], [553, 602, 125], [545, 590, 138], [534, 575, 150], [524, 562, 162]];
const lower = [[510, 545, 174], [524, 568, 187], [532, 580, 200], [538, 588, 213], [542, 591, 226], [543, 590, 239], [540, 586, 252], [536, 580, 265], [530, 570, 278], [518, 560, 291], [504, 543, 304], [484, 525, 316], [462, 505, 326]];

const BrandMark = () => (
  <Mark viewBox="138 24 486 432" aria-hidden="true">
    <g fill="#b90504">
      <path d="M218 150H392L386 209H276L262 268H352L345 329H248L232 392H330L318 453H140z" />
      <path d={fan(5, 392, 384, 428, 412, 150, 209)} />
      <path d={fan(6, 275, 262, 338, 320, 212, 270)} />
      <path d={fan(5, 352, 344, 368, 350, 268, 329)} />
      <path d={fan(6, 247, 232, 308, 290, 331, 393)} />
      <path d={fan(6, 330, 318, 392, 376, 393, 453)} />
      <path d="M485 393H548L536 453H470z" />
      <path d={fan(6, 548, 536, 607, 592, 393, 453)} />
      <path
        stroke="#fff"
        strokeWidth="3"
        paintOrder="stroke"
        d="M422 40Q450 26 500 27Q555 27 583 35L580 70L564 120L520 168Q546 185 548 230Q544 285 500 315Q450 334 400 334Q370 333 352 325L366 262Q395 275 425 271Q450 265 457 235Q458 210 418 208L431 150Q475 152 486 122Q493 96 460 94Q435 92 410 98z"
      />
      <path d={streaks(upper)} />
      <path d={streaks(lower)} />
    </g>
  </Mark>
);

export default function App() {
  return (
    <>
      <Global />
      <Page>
        <TitleBar>
          <Gap $w={8} />
          <span>Untitled - E³.cable - [Sheet 1]</span>
          <Spacer />
          <Win gap={12} />
        </TitleBar>
        <MenuBar>
          <Icon name="logo" />
          {["File", "Edit", "View", "Insert", "Format", "Tools", "Add-ons", "Window", "Help"].map((m) => (
            <MenuItem key={m}>{m}</MenuItem>
          ))}
          <Spacer />
          <Win gap={2} />
        </MenuBar>
        <Toolbars>
          <Strip>
            <Tools w={49} i="fnew fopen fdoc save" /><Sep $w={5} />
            <Tools w={100} i="cut copy paste paste ~brush ~link pasteb ~copy" /><Sep $w={4} />
            <Tools w={25} i="print help" /><Sep $w={4} />
            <Tools w={25} i="undo ~redo" /><More $w={6} aria-label="More" /><Sep $w={6} $grip />
            <Tools w={13} i="lock" /><Gap $w={3} />
            <Tools w={88} i="!plug !T !penta !ground !bars !frac !slash" /><More $w={6} aria-label="More" /><Sep $w={5} $grip />
            <Tools w={88} i="zin zout zpage z zwin zall ~zwin" /><Sep $w={4} />
            <Tools w={37} i="grid clip guides" /><Sep $w={5} />
            <Tools w={50} i="para !flow !nodes nodes2" /><Sep $w={4} />
            <Tools w={13} i="swap" /><Sep $w={3} />
            <Tools w={38} i="casc tileh tilev" /><Sep $w={4} />
            <Tools w={38} i="rnodes ~rnodes port" /><More $w={11} aria-label="More" /><Sep $w={5} $grip />
            <Tools w={13} i="!sheet" />
            <Tools w={60} i="dash dash super cross" /><Gap $w={2} /><More $w={6} aria-label="More" /><Sep $w={6} $grip />
            <Tools w={25} i="prev next" />
            <Tools w={13} i="refresh" /><More $w={6} aria-label="More" />
          </Strip>
          <Strip>
            <Tools w={87} i="sheetn ~sheetn wires conn rconn green target" /><Sep $w={4} />
            <Tools w={25} i="stop move" /><Sep $w={5} />
            <Tools w={12} i="stack" /><Spin v="0 mm" label="Offset" />
            <Tools w={13} i="pour" /><More $w={6} aria-label="More" /><Sep $w={6} $grip />
            <Tools w={112} i="cube1 cube2 cube3 cube4 cube1 cube1 hex hex diam" /><More $w={8} aria-label="More" /><Gap $w={4} />
            <Tools w={88} i="ysheet rack ~rack panel bluebox rpath shield" /><Sep $w={4} />
            <Tools w={12} i="dots" /><Sep $w={5} />
            <Tools w={38} i="wcube !frame ybolt" /><Sep $w={3} />
            <Tools w={25} i="redx axis" /><Sep $w={4} />
            <Tools w={25} i="bcube report" /><More $w={6} aria-label="More" /><Sep $w={6} $grip />
            <Tools w={75} i="fgrp fplay plus fdiag fdiag fdiag" /><Sep $w={4} />
            <Tools w={101} i="farrow farrow fsmall fsmall fsmall fsmall plus fsmall" /><More $w={7} aria-label="More" />
          </Strip>
          <Strip>
            <Tools w={100} i="bnode bnodey bnode bnode quad quadl fork fork" /><Sep $w={5} />
            <SwatchButton aria-label="Line color" /><Spin v="0.1 mm" label="Line width" /><Gap $w={1} />
            <LineStyle w={57} /><Sep $w={6} />
            <Tools w={38} i="!tag tagr tagx" /><Sep $w={4} />
            <Tools w={50} i="!ybox bwave quadl bnode" />
            <Tools w={12} i="redarrow" /><More $w={7} aria-label="More" /><Sep $w={6} $grip />
            <Drop v="" w={57} label="Signal" /><Gap $w={2} />
            <Tools w={25} i="chain filt" /><More $w={6} aria-label="More" /><Sep $w={6} $grip />
            <Drop v="H07V-K" w={58} label="Wire type" /><Gap $w={2} />
            <Drop v="1.5-BK" w={59} label="Wire" /><Gap $w={2} />
            <Drop v="CoreName_hori" w={58} label="Horizontal core name" /><Gap $w={2} />
            <Drop v="CoreName_vert" w={59} label="Vertical core name" /><Gap $w={1} />
            <Tools w={38} i="chain ytee ~quad" /><More $w={7} aria-label="More" />
          </Strip>
          <Strip>
            <Tools w={75} i="alignl alignr alignc alignm aligntop alignbot" />
            <Spin v="0 mm" label="Horizontal spacing" /><Gap $w={2} /><Spin v="0 mm" label="Vertical spacing" />
            <More $w={6} aria-label="More" /><Sep $w={5} $grip />
            <Tools w={13} i="pair" /><Sep $w={4} />
            <Tools w={38} i="film film2 film" /><Sep $w={3} />
            <Tools w={13} i="film" /><Sep $w={4} />
            <Tools w={13} i="quad" /><Sep $w={3} />
            <Tools w={25} i="wave book" /><Sep $w={5} />
            <Tools w={38} i="!gold gold2 gold3" /><Sep $w={4} />
            <SwatchButton aria-label="Fill color" /><Spin v="0.001 mm" w={36} label="Fill line width" />
            <LineStyle w={58} /><More $w={7} aria-label="More" /><Sep $w={5} $grip />
            <CloudButton><Icon name="comp" />Component Cloud</CloudButton>
          </Strip>
        </Toolbars>

        <Main>
          <Panel>
            <Header title="Devices" />
            <White>
              <Tree h={78} cols={[76, 50]} heads={["Devices", "Placement", "Inf"]} rows={deviceRows} />
            </White>
            <ScrollX $from="9px" $size="118px"><Arrow to="l" /><Arrow to="r" /></ScrollX>
            <Tabs $h={12}>
              <Tab $c="transparent"><Icon name="doc" />Sheet</Tab>
              <Tab $c="transparent"><Icon name="leaf" />Parts</Tab>
              <Tab $c="#6f94bd" $on><Icon name="gbook" />Devices</Tab>
            </Tabs>
          </Panel>
          <Panel>
            <CanvasRow>
              <Schematic />
              <ScrollY $from={84} $size={74}><Arrow to="u" /><Arrow to="d" /></ScrollY>
            </CanvasRow>
            <ScrollX $from="38%" $size="28%"><Arrow to="l" /><Arrow to="r" /></ScrollX>
          </Panel>
          <Stack>
            <Panel>
              <Header title="Component" />
              <Form onSubmit={(e) => e.preventDefault()}>
                <Combo>
                  Component name
                  <ComboBox>
                    <FieldSelect defaultValue="DT04-3P"><option>DT04-3P</option></FieldSelect>
                    <Arrow to="d" />
                  </ComboBox>
                </Combo>
                <ResetButton type="button">Reset search</ResetButton>
              </Form>
              <White>
                <Tree h={70} cols={[76, 75]} heads={["Component", "Characteristic", "In"]} rows={componentRows} />
              </White>
              <ScrollX $from="9px" $size="100px"><Arrow to="l" /><Arrow to="r" /></ScrollX>
              <Tabs $h={12}>
                <Tab $c="#6f94bd" $on><Icon name="bbook" />Component</Tab>
                <Tab $c="#e8c45c"><Icon name="gbook" />Symbol</Tab>
                <Tab $c="#e8c45c"><Icon name="rbook" />Misc</Tab>
              </Tabs>
            </Panel>
            <PreviewPanel>
              <Header title="3D Preview" />
              <White>
                <Axes aria-label="Coordinate axes">
                  <path d="M20.500 41V25" stroke="#3fb24a" />
                  <path d="M21 41.500H36" stroke="#b05a50" />
                  <path d="M18 28h5l-2.500-4z" fill="#3fb24a" />
                  <path d="M33 39v5l4-2.500z" fill="#b05a50" />
                  <text x="18" y="24" fill="#58b560">Y</text>
                  <text x="36" y="44" fill="#c0605a">X</text>
                  <text x="18" y="44" fill="#2b3fa0">Z</text>
                </Axes>
              </White>
            </PreviewPanel>
          </Stack>
        </Main>

        <Bottom>
          <Panel>
            <Header title="Messages" />
            <Log>
              <LogRows>
                {[["1", "2"], ["3", "4"], ["5", "6"]].map(([a, b]) => (
                  <LogRow key={a}>
                    <span>I –</span>
                    <span>{`Connector <-X${a}> renamed to <-X${b}>!`}</span>
                    <Jump href="#">[Jump]</Jump>
                  </LogRow>
                ))}
              </LogRows>
              <ScrollY $from={11} $size={9}><Arrow to="u" /><Arrow to="d" /></ScrollY>
            </Log>
            <Tabs $h={12}>
              <Tab $c="#6f94bd" $on><Icon name="msg" />Messages</Tab>
              <Tab $c="#e8c45c"><Icon name="msg" />Results</Tab>
            </Tabs>
          </Panel>
          <Panel>
            <Header title="Preview" />
            <White>
              <Thumb viewBox="0 0 56 41" aria-label="Sheet preview">
                <rect x="0.500" y="0.500" width="55" height="39" fill="#f4f4f4" stroke="#222" />
                <path d="M2.500 8V38M1 39h54M14 37.500h12M30 37.500h24" stroke="#222" />
                <path d="M7.500 3V30H50V3" fill="none" stroke="#ccc" />
                <rect x="15" y="10" width="16" height="8" fill="#fff" stroke="#444" />
                <path d="M18 12h4v2h-4zM24 12h4v3h-4zM19 15h8v1h-8z" fill="#222" />
              </Thumb>
            </White>
          </Panel>
        </Bottom>
        <BottomBar>
          <Strip>
            <Tools w={125} i="line penta2 rect curve circ arc arc2 oval spline text" /><Sep $w={6} />
            <SwatchButton aria-label="Color" /><Spin v="0.1 mm" label="Width" /><Gap $w={1} />
            <LineStyle w={58} /><Sep $w={4} />
            <Tools w={63} i="group ~copy group ~group ~copy" /><Sep $w={4} />
            <Tools w={75} i="order order order2 order2 poster spread" /><More $w={7} aria-label="More" /><Sep $w={6} $grip />
            <Tools w={13} i="T" />
            <Drop v="Arial" w={73} label="Font" /><Gap $w={2} /><Drop v="" w={34} label="Font size" /><Gap $w={2} />
            <SwatchButton aria-label="Text color" />
            <Tools w={37} i="B I U" /><Sep $w={4} />
            <Tools w={38} i="!left center right" /><More $w={7} aria-label="More" />
          </Strip>
        </BottomBar>
        <Status>
          <StatusText>Ready</StatusText>
          <Spacer />
          <StatusText>198.189,185.082</StatusText>
          <Gap $w={5} />
          <StatusText>MM</StatusText>
          <StatusText $dim>CAP</StatusText>
          <StatusText>NUM</StatusText>
          <StatusText $dim>SCR</StatusText>
        </Status>
      </Page>
      <Brand>
        <BrandMark />
        <Word>series</Word>
      </Brand>
      <Watermark>www.mfgrobots.com</Watermark>
    </>
  );
}
